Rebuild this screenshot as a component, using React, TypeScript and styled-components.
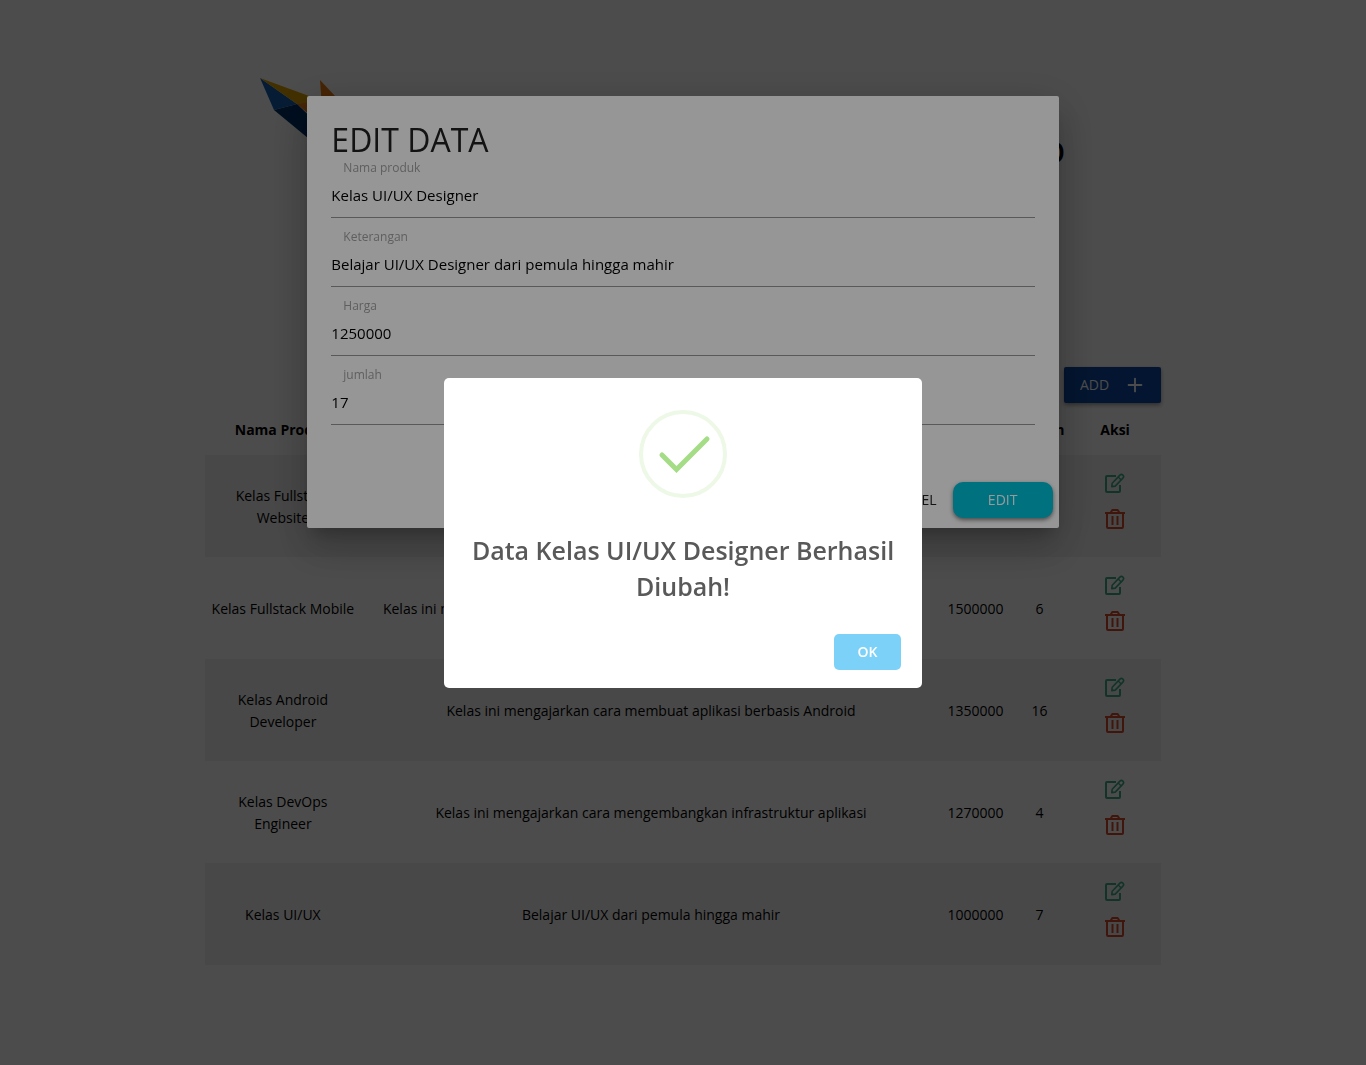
import React from "react";
import styled, { createGlobalStyle } from "styled-components";
import { Plus } from "lucide-react";

const GlobalStyle = createGlobalStyle`
  *, *::before, *::after { box-sizing: border-box; }
  body {
    margin: 0;
    background: #fff;
    color: #000;
    font-family: "Segoe UI", "Open Sans", "Noto Sans", sans-serif;
    font-size: 14px;
    line-height: 22px;
  }
  button, input { font-family: inherit; }
`;

const Page = styled.main`
  width: 70%;
  margin: 0 auto;
  padding: 48px 0 100px;
`;

const Header = styled.header`
  display: flex;
  align-items: flex-start;
  justify-content: space-between;
  height: 319px;
  padding: 0 96px 0 55px;
`;

const Logo = styled.svg`
  width: 240px;
  height: 160px;
  margin-top: 30px;
`;

const Brand = styled.h1`
  margin: 84px 0 0;
  font-size: 28px;
  line-height: 40px;
  font-weight: 600;
`;

const Toolbar = styled.div`
  display: flex;
  justify-content: flex-end;
`;

const AddButton = styled.button`
  display: flex;
  align-items: center;
  gap: 15px;
  height: 36px;
  padding: 0 15px 1px 16px;
  border: 0;
  border-radius: 2px;
  background: #0d47a1;
  color: #fff;
  font-size: 14px;
  box-shadow: 0 2px 4px rgba(0, 0, 0, 0.4);
`;

const Table = styled.table`
  width: 100%;
  table-layout: fixed;
  border-collapse: collapse;
  text-align: center;
`;

const Col = styled.col<{ $width?: number }>`
  width: ${({ $width }) => ($width ? `${$width}px` : "auto")};
`;

const HeadCell = styled.th`
  height: 52px;
  padding: 2px 0 0;
  font-weight: 700;
`;

const Row = styled.tr`
  height: 102px;
  &:nth-child(odd) { background: #f2f2f2; }
`;

const Cell = styled.td`
  padding: 2px 4px 0;
`;

const Actions = styled.div`
  display: flex;
  flex-direction: column;
  align-items: center;
  gap: 16px;
  padding-bottom: 12px;
`;

const IconButton = styled.button<{ $color: string }>`
  display: flex;
  padding: 0;
  border: 0;
  background: none;
  color: ${({ $color }) => $color};
`;

const Icon = styled.svg`
  width: 20px;
  height: 20px;
  fill: none;
  stroke: currentColor;
  stroke-width: 2;
  stroke-linejoin: round;
`;

const Backdrop = styled.div<{ $shade: number; $center?: boolean }>`
  position: fixed;
  inset: 0;
  display: flex;
  justify-content: center;
  align-items: ${({ $center }) => ($center ? "center" : "flex-start")};
  padding-top: ${({ $center }) => ($center ? 0 : 96)}px;
  background: rgba(0, 0, 0, ${({ $shade }) => $shade});
`;

const Dialog = styled.form`
  width: 55%;
  padding: 24px 24px 10px;
  border-radius: 2px;
  background: #fafafa;
  box-shadow: 0 11px 15px -7px rgba(0, 0, 0, 0.2), 0 24px 38px 3px rgba(0, 0, 0, 0.14),
    0 9px 46px 8px rgba(0, 0, 0, 0.12);
`;

const DialogTitle = styled.h2`
  margin: 0;
  font-size: 32px;
  line-height: 40px;
  font-weight: 400;
  color: #212121;
`;

const Fields = styled.div`
  display: flex;
  flex-direction: column;
  gap: 11px;
`;

const Field = styled.div`
  display: flex;
  flex-direction: column;
  padding-bottom: 3px;
  border-bottom: 1px solid #949494;
`;

const Label = styled.label`
  padding: 0 12px;
  font-size: 12px;
  line-height: 16px;
  color: #9e9e9e;
`;

const Input = styled.input`
  width: 100%;
  height: 38px;
  padding: 0;
  border: 0;
  outline: 0;
  background: none;
  color: #000;
  font-size: 15px;
`;

const DialogActions = styled.div`
  display: flex;
  justify-content: flex-end;
  margin: 57px -18px 0;
`;

const DialogButton = styled.button<{ $primary?: boolean }>`
  width: ${({ $primary }) => ($primary ? "100px" : "auto")};
  height: 36px;
  padding: 0 16px 2px;
  border: 0;
  border-radius: 10px;
  font-size: 14px;
  color: ${({ $primary }) => ($primary ? "#fff" : "#212121")};
  background: ${({ $primary }) => ($primary ? "#00bcd4" : "none")};
  box-shadow: ${({ $primary }) => ($primary ? "0 2px 4px rgba(0, 0, 0, 0.5)" : "none")};
`;

const Alert = styled.section`
  display: flex;
  flex-direction: column;
  width: 478px;
  max-width: 90%;
  padding: 32px 20px 18px;
  border-radius: 5px;
  background: #fff;
`;

const SuccessIcon = styled.svg`
  align-self: center;
  width: 88px;
  height: 88px;
`;

const AlertTitle = styled.h3`
  margin: 34px 0 30px;
  font-size: 25px;
  line-height: 36px;
  font-weight: 600;
  text-align: center;
  color: #595959;
`;

const OkButton = styled.button`
  align-self: flex-end;
  width: 67px;
  height: 36px;
  margin-right: 1px;
  border: 0;
  border-radius: 5px;
  background: #7cd1f9;
  color: #fff;
  font-size: 14px;
  font-weight: 600;
`;

const EditIcon = () => (
  <Icon viewBox="0 0 20 20" aria-hidden="true">
    <path d="M11 3H2Q1 3 1 4V18Q1 19 2 19H14Q15 19 15 18V12" />
    <path d="M6.8 13.6 7.2 10.2 14.9 2.1a2.1 2.1 0 0 1 3 3L10.2 13.1Z" strokeWidth="1.6" />
    <path d="M13.2 3.9 16.2 6.9" strokeWidth="1.4" />
  </Icon>
);

const TrashIcon = () => (
  <Icon viewBox="0 0 20 20" aria-hidden="true">
    <path d="M0 4H20" />
    <path d="M5.5 4 7.3 1H12.7L14.5 4" />
    <path d="M2 4V18Q2 19 3 19H17Q18 19 18 18V4" />
    <path d="M7.5 7V16M12.5 7V16" />
  </Icon>
);

const products = [
  { name: "Kelas Fullstack Website", info: "Kelas ini mengajarkan cara membuat website", price: 1200000, stock: 10 },
  { name: "Kelas Fullstack Mobile", info: "Kelas ini mengajarkan cara membuat aplikasi berbasis multi-platform dan Android", price: 1500000, stock: 6 },
  { name: "Kelas Android Developer", info: "Kelas ini mengajarkan cara membuat aplikasi berbasis Android", price: 1350000, stock: 16 },
  { name: "Kelas DevOps Engineer", info: "Kelas ini mengajarkan cara mengembangkan infrastruktur aplikasi", price: 1270000, stock: 4 },
  { name: "Kelas UI/UX", info: "Belajar UI/UX dari pemula hingga mahir", price: 1000000, stock: 7 },
];

const fields = [
  { id: "nama", label: "Nama produk", value: "Kelas UI/UX Designer" },
  { id: "keterangan", label: "Keterangan", value: "Belajar UI/UX Designer dari pemula hingga mahir" },
  { id: "harga", label: "Harga", value: "1250000" },
  { id: "jumlah", label: "jumlah", value: "17" },
];

export default function App() {
  return (
    <>
      <GlobalStyle />
      <Page>
        <Header>
          <Logo viewBox="0 0 240 160" aria-hidden="true">
            <path d="M0 0 14 32 37 26Z" fill="#1560b0" />
            <path d="M0 0 37 26 60 24V22Z" fill="#e0a100" />
            <path d="M37 26 60 22 60 46Z" fill="#e87a10" />
            <path d="M14 32 37 26 60 48 60 70Z" fill="#003068" />
            <path d="M60 2 62 30 90 34Z" fill="#e87a10" />
          </Logo>
          <Brand>TOKO MAJOO</Brand>
        </Header>
        <Toolbar>
          <AddButton type="button">
            ADD <Plus size={22} strokeWidth={2} />
          </AddButton>
        </Toolbar>
        <Table>
          <colgroup>
            <Col $width={156} />
            <Col />
            <Col $width={69} />
            <Col $width={59} />
            <Col $width={92} />
          </colgroup>
          <thead>
            <tr>
              <HeadCell>Nama Produk</HeadCell>
              <HeadCell>Keterangan</HeadCell>
              <HeadCell>Harga</HeadCell>
              <HeadCell>Jumlah</HeadCell>
              <HeadCell>Aksi</HeadCell>
            </tr>
          </thead>
          <tbody>
            {products.map((p) => (
              <Row key={p.name}>
                <Cell>{p.name}</Cell>
                <Cell>{p.info}</Cell>
                <Cell>{p.price}</Cell>
                <Cell>{p.stock}</Cell>
                <Cell>
                  <Actions>
                    <IconButton type="button" aria-label="Edit" $color="#3dae86"><EditIcon /></IconButton>
                    <IconButton type="button" aria-label="Hapus" $color="#d84a2b"><TrashIcon /></IconButton>
                  </Actions>
                </Cell>
              </Row>
            ))}
          </tbody>
        </Table>
      </Page>

      <Backdrop $shade={0.5}>
        <Dialog>
          <DialogTitle>EDIT DATA</DialogTitle>
          <Fields>
            {fields.map((f) => (
              <Field key={f.id}>
                <Label htmlFor={f.id}>{f.label}</Label>
                <Input id={f.id} defaultValue={f.value} />
              </Field>
            ))}
          </Fields>
          <DialogActions>
            <DialogButton type="button">CANCEL</DialogButton>
            <DialogButton type="button" $primary>EDIT</DialogButton>
          </DialogActions>
        </Dialog>
      </Backdrop>

      <Backdrop $shade={0.4} $center>
        <Alert role="alertdialog">
          <SuccessIcon viewBox="0 0 88 88" aria-hidden="true">
            <circle cx="44" cy="44" r="42" fill="none" stroke="#edf8e7" strokeWidth="4" />
            <path d="M23 45 37.5 59.5 68 29" fill="none" stroke="#a5dc86" strokeWidth="5" strokeLinecap="round" />
          </SuccessIcon>
          <AlertTitle>Data Kelas UI/UX Designer Berhasil Diubah!</AlertTitle>
          <OkButton type="button">OK</OkButton>
        </Alert>
      </Backdrop>
    </>
  );
}
